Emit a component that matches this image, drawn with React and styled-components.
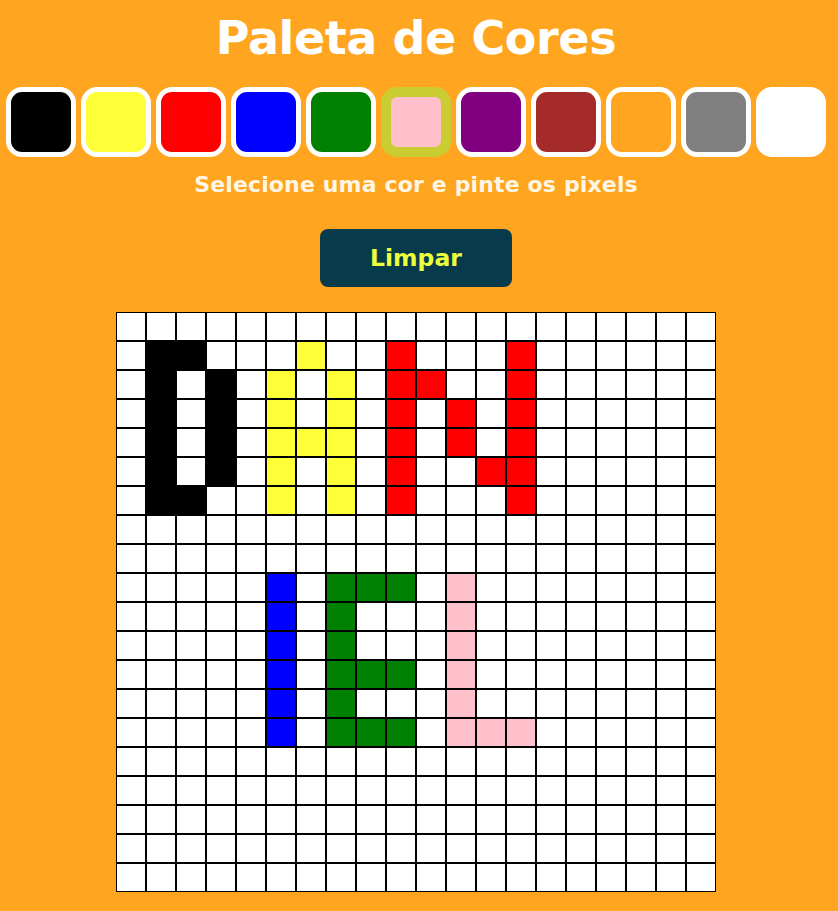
import React, { useState } from 'react';
import styled, { createGlobalStyle } from 'styled-components';

const GlobalStyle = createGlobalStyle`
  body {
    margin: 0;
    background-color: #ffa51f;
    font-family: "DejaVu Sans", "Noto Sans", sans-serif;
  }
`;

const COLORS = {
  K: 'black',
  Y: '#ffff38',
  R: 'red',
  B: 'blue',
  G: 'green',
  P: 'pink',
  V: 'purple',
  M: 'brown',
  O: '#ffa51f',
  C: 'gray',
  W: 'white',
};

const PALETTE = ['K', 'Y', 'R', 'B', 'G', 'P', 'V', 'M', 'O', 'C', 'W'];

// the starting drawing: DAN / IEL
const ART = [
  '....................',
  '.KK...Y..R...R......',
  '.K.K.Y.Y.RR..R......',
  '.K.K.Y.Y.R.R.R......',
  '.K.K.YYY.R.R.R......',
  '.K.K.Y.Y.R..RR......',
  '.KK..Y.Y.R...R......',
  '....................',
  '....................',
  '.....B.GGG.P........',
  '.....B.G...P........',
  '.....B.G...P........',
  '.....B.GGG.P........',
  '.....B.G...P........',
  '.....B.GGG.PPP......',
  '....................',
  '....................',
  '....................',
  '....................',
  '....................',
];

const startPixels = () =>
  ART.flatMap((row) => row.split('').map((ch) => (ch === '.' ? 'white' : COLORS[ch])));

const Page = styled.div`
  width: 832px;
  display: flex;
  flex-direction: column;
  align-items: center;
  padding-bottom: 19px;
`;

const Title = styled.h1`
  margin: 0;
  color: #ffffff;
  font-size: 46px;
  font-weight: 700;
  letter-spacing: -0.4px;
  line-height: 76px;
`;

const Palette = styled.div`
  display: flex;
  gap: 5px;
  margin-top: 11px;
`;

const Swatch = styled.button`
  box-sizing: border-box;
  width: 70px;
  height: 70px;
  padding: 0;
  border-radius: 16px;
  border: ${({ $active }) => ($active ? '10px solid #c9cd31' : '5px solid #ffffff')};
  background-color: ${({ $color }) => $color};
  cursor: pointer;
`;

const Hint = styled.p`
  margin: 14px 0 0;
  color: #fff7e4;
  font-size: 22px;
  font-weight: 700;
  letter-spacing: 0.15px;
  line-height: 28px;
`;

const ClearButton = styled.button`
  margin-top: 30px;
  width: 192px;
  height: 58px;
  border: none;
  border-radius: 8px;
  background-color: #073b4c;
  color: #ecff3c;
  font-family: inherit;
  font-size: 23.5px;
  font-weight: 700;
  cursor: pointer;
`;

const Board = styled.div`
  margin-top: 25px;
  display: grid;
  grid-template-columns: repeat(20, 30px);
  grid-auto-rows: 29px;
`;

const Pixel = styled.div`
  box-sizing: border-box;
  border: 1px solid #000000;
  background-color: ${({ $color }) => $color};
  cursor: pointer;
`;

export default function App() {
  const [current, setCurrent] = useState('pink');
  const [pixels, setPixels] = useState(startPixels);

  const paint = (i) => {
    setPixels((prev) => prev.map((c, j) => (j === i ? current : c)));
  };

  return (
    <>
      <GlobalStyle />
      <Page>
        <Title>Paleta de Cores</Title>
        <Palette>
          {PALETTE.map((key) => (
            <Swatch
              key={key}
              $color={COLORS[key]}
              $active={COLORS[key] === current}
              onClick={() => setCurrent(COLORS[key])}
            />
          ))}
        </Palette>
        <Hint>Selecione uma cor e pinte os pixels</Hint>
        <ClearButton onClick={() => setPixels(Array(400).fill('white'))}>Limpar</ClearButton>
        <Board>
          {pixels.map((c, i) => (
            <Pixel key={i} $color={c} onClick={() => paint(i)} />
          ))}
        </Board>
      </Page>
    </>
  );
}
